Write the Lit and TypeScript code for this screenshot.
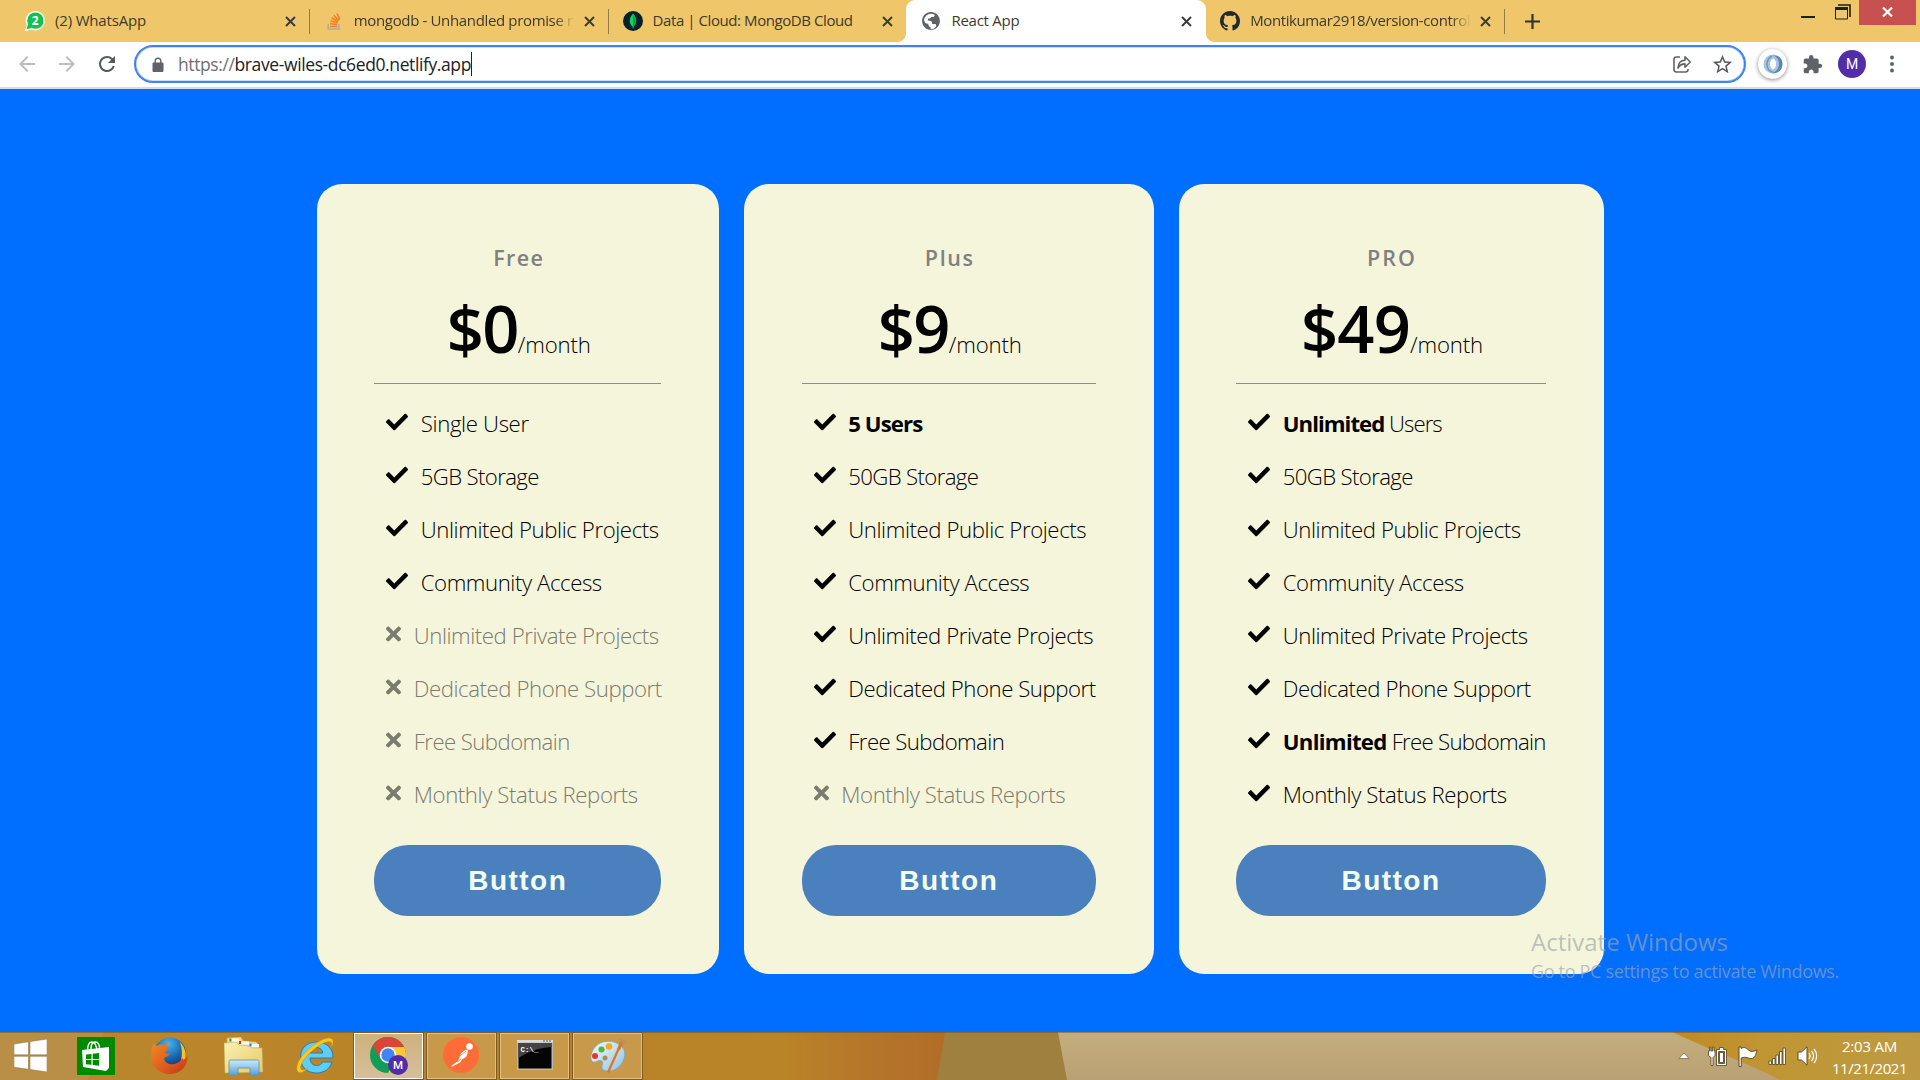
import { LitElement, html, svg, css, nothing } from "lit";
import { customElement, property } from "lit/decorators.js";
import { classMap } from "lit/directives/class-map.js";

/** Inline text whose tracking is adjusted so that it fills a given advance width. */
@customElement("fit-text")
class FitText extends LitElement {
  @property({ type: Number }) w = 0;
  static styles = css`
    :host { display: inline-block; white-space: pre; flex: none; }
  `;
  firstUpdated() {
    const n = (this.textContent ?? "").length;
    const natural = this.getBoundingClientRect().width;
    if (n && this.w) this.style.letterSpacing = `${(this.w - natural) / n}px`;
  }
  render() {
    return html`<slot></slot>`;
  }
}

const icons = {
  check: html`<svg class="check" viewBox="0 0 512 512"><path d="M173.898 439.404l-166.4-166.4c-9.997-9.997-9.997-26.206 0-36.204l36.203-36.204c9.997-9.998 26.207-9.998 36.204 0L192 312.69 432.095 72.596c9.997-9.997 26.207-9.997 36.204 0l36.203 36.204c9.997 9.997 9.997 26.206 0 36.204l-294.4 294.401c-9.998 9.997-26.207 9.997-36.204-.001z"/></svg>`,
  times: html`<svg class="times" viewBox="0 0 352 512"><path d="M242.72 256l100.07-100.07c12.28-12.28 12.28-32.19 0-44.48l-22.24-22.24c-12.28-12.28-32.19-12.28-44.48 0L176 189.28 75.93 89.21c-12.28-12.28-32.19-12.28-44.48 0L9.21 111.45c-12.28 12.28-12.28 32.19 0 44.48L109.28 256 9.21 356.07c-12.28 12.28-12.28 32.19 0 44.48l22.24 22.24c12.28 12.28 32.2 12.28 44.48 0L176 322.72l100.07 100.07c12.28 12.28 32.2 12.28 44.48 0l22.24-22.24c12.28-12.28 12.28-32.19 0-44.48L242.72 256z"/></svg>`,
  close: html`<svg class="close" viewBox="0 0 11 11"><path d="M1 1l9 9M10 1l-9 9" stroke="#3c3c38" stroke-width="2" fill="none"/></svg>`,
  whatsapp: html`<svg class="fav" viewBox="0 0 20 20"><circle cx="10.300" cy="9.700" r="9.700" fill="#fff"/><path d="M0 20l1.800-6 4.700 4.700z" fill="#fff"/><circle cx="10.400" cy="9.600" r="8.200" fill="#12c150"/><path d="M1.600 18.300l1.500-5.300 3.500 3.900z" fill="#12c150"/><text x="10.200" y="14" text-anchor="middle" font-family="Open Sans, sans-serif" font-weight="700" font-size="12" fill="#fff">2</text></svg>`,
  stack: html`<svg class="fav" viewBox="0 0 20 20" fill="none"><path d="M4.200 13v5h10.600v-5" stroke="#b3aca0" stroke-width="1.600"/><g stroke="#f48024" stroke-width="1.700"><path d="M6 15.500h7.200M6 12.700l7.200.8M6.500 9.800l7 2M7.700 6.800l6.300 3.600M9.800 4.300l5 5.200M13 2.500l2.800 6.200"/></g></svg>`,
  mongo: html`<svg class="fav" viewBox="0 0 20 20"><circle cx="10" cy="10" r="10" fill="#04202b"/><path d="M10 2.500c2.400 2.900 3.300 5 3.200 7.500-.1 2.600-1.300 4.200-2.700 5.500l-.2 2h-.6l-.2-2C8.100 14.200 6.900 12.500 6.800 10 6.700 7.500 7.800 5.300 10 2.500z" fill="#12d45b"/><path d="M10 2.500c2.400 2.900 3.300 5 3.200 7.500-.1 2.600-1.300 4.200-2.700 5.500l-.2 2H10z" fill="#0aa84a"/></svg>`,
  globe: html`<svg class="fav" viewBox="0 0 24 24"><path fill="#5f6368" d="M12 1.300C6.100 1.300 1.300 6.100 1.300 12S6.100 22.700 12 22.700 22.700 17.900 22.700 12 17.900 1.300 12 1.300zm0 2.100c1.800 0 3.300.5 4.700 1.400l-.9 1.500c-.4.700-1.200 1-2 1h-1.500l-1.500 1.800H8.500l-.3 2.400 2.800.3c1.400.2 2.300 1.100 2.300 2.300v1.400h3.200c.9 0 1.600.6 1.600 1.500v1.800a8.600 8.600 0 0 1-6.600 3v-2.300l-1.300-.6c-.8-.4-1.300-1.200-1.300-2.100v-1.400l-2.500-.4a2.200 2.200 0 0 1-1.700-1.500l-1.100-2.700A8.600 8.600 0 0 1 12 3.400z"/></svg>`,
  github: html`<svg class="fav" viewBox="0 0 16 16"><path fill="#24292f" d="M8 0C3.580 0 0 3.580 0 8c0 3.540 2.290 6.530 5.470 7.590.4.070.55-.17.55-.38 0-.19-.01-.82-.01-1.490-2.010.37-2.530-.49-2.690-.94-.09-.23-.48-.94-.82-1.130-.28-.15-.68-.52-.01-.53.63-.01 1.080.58 1.230.82.72 1.210 1.870.87 2.330.66.07-.52.28-.87.51-1.070-1.780-.2-3.640-.89-3.640-3.950 0-.87.31-1.590.82-2.150-.08-.2-.36-1.020.08-2.120 0 0 .67-.21 2.200.82.64-.18 1.320-.27 2-.27s1.360.09 2 .27c1.530-1.040 2.200-.82 2.200-.82.44 1.100.16 1.920.08 2.120.51.56.82 1.270.82 2.150 0 3.070-1.870 3.750-3.650 3.950.29.25.54.73.54 1.480 0 1.070-.01 1.930-.01 2.200 0 .21.15.46.55.38A8.010 8.010 0 0 0 16 8c0-4.420-3.580-8-8-8z"/></svg>`,
};

interface Tab { icon: keyof typeof icons; label: string; w: number; active?: boolean; clip?: boolean; }
const tabs: Tab[] = [
  { icon: "whatsapp", label: "(2) WhatsApp", w: 91 },
  { icon: "stack", label: "mongodb - Unhandled promise r", w: 219, clip: true },
  { icon: "mongo", label: "Data | Cloud: MongoDB Cloud", w: 200 },
  { icon: "globe", label: "React App", w: 68, active: true },
  { icon: "github", label: "Montikumar2918/version-control", w: 220, clip: true },
];

/** Browser tab strip, window buttons and address bar. */
@customElement("browser-chrome")
class BrowserChrome extends LitElement {
  static styles = css`
    :host { display: block; }
    svg { display: block; flex: none; }
    .strip { display: flex; height: 42px; background: #efc76a; padding-left: 11px; }
    .tab { position: relative; box-sizing: border-box; width: 298.8px; height: 42px; display: flex; align-items: center; padding: 0 14px; color: #3d3a30; font-size: 15px; }
    .tab::after { content: ""; position: absolute; right: -.500px; top: 9px; width: 1.500px; height: 25px; background: #8f7a48; }
    .tab.active { background: #fff; border-radius: 9px 9px 0 0; margin-left: -1px; padding-left: 15px; width: 299.8px; }
    .tab.active::after, .tab.before-active::after { display: none; }
    .foot { position: absolute; bottom: 0; width: 8px; height: 8px; }
    .foot.l { left: -8px; background: radial-gradient(circle at 0 0, transparent 7.500px, #fff 8px); }
    .foot.r { right: -8px; background: radial-gradient(circle at 100% 0, transparent 7.500px, #fff 8px); }
    .fav { width: 20px; height: 20px; margin-right: 10px; }
    .label { width: 221px; overflow: hidden; white-space: nowrap; line-height: 24px; margin-top: -2px; }
    .label.clip { mask-image: linear-gradient(90deg, #000 91%, transparent 100%); }
    .close { width: 11px; height: 11px; margin-left: 9px; }
    .plus { width: 15px; height: 15px; margin: 14px 0 0 20px; }
    .window { display: flex; margin-left: auto; padding-right: 4px; }
    .min { width: 14px; height: 14px; margin: 5px 20px 0 0; }
    .restore { width: 16px; height: 16px; margin: 4px 8px 0 0; }
    .quit { width: 57px; height: 25px; background: #c75050; display: flex; align-items: center; justify-content: center; }
    .quit svg { width: 11px; height: 10px; margin-top: -2px; }
    .bar { box-sizing: border-box; display: flex; align-items: center; height: 47px; padding: 2px 0 3px 15px; background: #fff; border-bottom: 2px solid #d9dadc; }
    .nav { width: 24px; height: 24px; margin-right: 16px; }
    .nav.reload { margin-right: 15px; }
    .omni { box-sizing: border-box; width: 1612px; height: 38px; border: 2px solid #4083ee; box-shadow: inset 0 0 0 .600px #9cbef7; border-radius: 19px; display: flex; align-items: center; padding: 0 10px 0 16px; }
    .lock { width: 12px; height: 15px; margin-right: 14px; }
    .url { font-size: 17.500px; line-height: 28px; color: #202124; margin-top: -1px; }
    .scheme { color: #6b6f73; }
    .caret { width: 1px; height: 24px; background: #222; }
    .share { width: 21px; height: 20px; margin: 0 18px 0 auto; }
    .star { width: 23px; height: 23px; }
    .ext { width: 29px; height: 30px; margin-left: 12px; border-radius: 50%; box-shadow: 0 1px 4px #0007; display: flex; align-items: center; justify-content: center; }
    .ext svg { width: 20px; height: 20px; }
    .puzzle { width: 21px; height: 21px; margin-left: 15px; }
    .avatar { width: 28px; height: 28px; margin-left: 15px; border-radius: 50%; background: #512da8; color: #fff; text-align: center; font: 14px/28px Roboto, sans-serif; }
    .dots { width: 6px; height: 18px; margin-left: 23px; }
  `;
  render() {
    return html`
      <div class="strip">
        ${tabs.map((t, i) => html`
          <div class=${classMap({ tab: true, active: !!t.active, "before-active": !!tabs[i + 1]?.active })}>
            ${t.active ? html`<i class="foot l"></i><i class="foot r"></i>` : nothing}
            ${icons[t.icon]}
            <div class=${classMap({ label: true, clip: !!t.clip })}><fit-text .w=${t.w}>${t.label}</fit-text></div>
            ${icons.close}
          </div>`)}
        <svg class="plus" viewBox="0 0 15 15"><path d="M7.500 0v15M0 7.500h15" stroke="#33322c" stroke-width="2.200"/></svg>
        <div class="window">
          <svg class="min" viewBox="0 0 14 14"><path d="M0 12h14" stroke="#1e1e1e" stroke-width="2"/></svg>
          <svg class="restore" viewBox="0 0 16 16" fill="none" stroke="#1e1e1e"><path d="M3 1h12v12" stroke-width="1.600"/><path d="M.500 4.500h12v10.500H.500z"/><path d="M0 4.500h13" stroke-width="3"/></svg>
          <div class="quit"><svg viewBox="0 0 11 10"><path d="M1 .500l9 9M10 .500l-9 9" stroke="#fff" stroke-width="2.200"/></svg></div>
        </div>
      </div>
      <div class="bar">
        <svg class="nav" viewBox="0 0 24 24" fill="#bbbdc0"><path d="M20 11H7.830l5.590-5.590L12 4l-8 8 8 8 1.410-1.410L7.830 13H20v-2z"/></svg>
        <svg class="nav" viewBox="0 0 24 24" fill="#bbbdc0"><path d="M12 4l-1.410 1.410L16.170 11H4v2h12.170l-5.580 5.590L12 20l8-8z"/></svg>
        <svg class="nav reload" viewBox="0 0 24 24" fill="#55595d"><path d="M17.650 6.350A7.960 7.960 0 0 0 12 4a8 8 0 1 0 7.730 10h-2.080A6 6 0 1 1 12 6c1.660 0 3.140.69 4.220 1.780L13 11h7V4l-2.350 2.350z"/></svg>
        <div class="omni">
          <svg class="lock" viewBox="0 0 11 15"><path fill="#5f6368" fill-rule="evenodd" d="M1.200 5.500H2V4a3.500 3.500 0 0 1 7 0v1.500h.8c.7 0 1.200.5 1.200 1.200v7c0 .7-.5 1.300-1.200 1.300H1.200C.500 15 0 14.400 0 13.700v-7c0-.7.500-1.200 1.200-1.200zm2.200 0h4.200V4a2.100 2.100 0 0 0-4.200 0z"/></svg>
          <fit-text class="url" .w=${293}><span class="scheme">https://</span>brave-wiles-dc6ed0.netlify.app</fit-text><i class="caret"></i>
          <svg class="share" viewBox="0 0 21 20" fill="none" stroke="#5f6368" stroke-width="1.600"><path d="M8 3H4.500A2.500 2.500 0 0 0 2 5.500v10A2.500 2.500 0 0 0 4.500 18h9a2.500 2.500 0 0 0 2.500-2.500V15"/><path d="M6 14c.3-5 3-7.800 7-7.800V2.800l5.300 5.200-5.300 5.200V9.900c-3 0-5.200 1.200-7 4.100z" stroke-linejoin="round"/></svg>
          <svg class="star" viewBox="0 0 24 24" fill="#55595d"><path d="M22 9.240l-7.190-.62L12 2 9.190 8.630 2 9.240l5.460 4.730L5.820 21 12 17.270 18.180 21l-1.630-7.030L22 9.240zM12 15.400l-3.760 2.270 1-4.280-3.320-2.880 4.380-.38L12 6.100l1.710 4.040 4.380.38-3.320 2.880 1 4.280L12 15.400z"/></svg>
        </div>
        <div class="ext"><svg viewBox="0 0 20 20" fill="none"><path fill="#a9c3de" fill-rule="evenodd" d="M10 .5a9.500 9.500 0 1 0 0 19 9.500 9.500 0 0 0 0-19zM10.300 4.500c2 1 2.700 3 2.700 5.500s-1 4.800-3.300 5.500C7.700 14.500 7 12.500 7 10s1-4.800 3.300-5.500z"/><path d="M9 1.500c4.500.5 7.200 4 7 8.500-.2 4-2.500 7.500-6.500 9.300 6 .2 10-3.800 10-9.300S15.500.700 9 1.500z" fill="#5b86b4"/><path d="M11 18.500C6.500 18 3.800 14.500 4 10c.2-3.500 2-6.500 5-8" stroke="#6f97c1" stroke-width="1.500"/></svg></div>
        <svg class="puzzle" viewBox="0 0 24 24" fill="#5f6368"><path d="M20.500 11H19V7c0-1.100-.9-2-2-2h-4V3.500a2.500 2.500 0 0 0-5 0V5H4c-1.100 0-1.990.9-1.990 2v3.800H3.500c1.490 0 2.700 1.210 2.700 2.700s-1.210 2.700-2.700 2.700H2V20c0 1.100.9 2 2 2h3.800v-1.500c0-1.490 1.210-2.700 2.700-2.700 1.490 0 2.700 1.210 2.700 2.700V22H17c1.100 0 2-.9 2-2v-4h1.500a2.500 2.500 0 0 0 0-5z"/></svg>
        <div class="avatar">M</div>
        <svg class="dots" viewBox="0 0 6 18" fill="#5f6368"><circle cx="3" cy="2.500" r="2"/><circle cx="3" cy="9" r="2"/><circle cx="3" cy="15.500" r="2"/></svg>
      </div>`;
  }
}

interface Feature { bold?: string; text?: string; w: number; off?: boolean; }
interface Plan { name: string; nameW: number; price: string; priceW: number; inner: number; features: Feature[]; }
const shared: Feature[] = [
  { text: "Unlimited Public Projects", w: 238 },
  { text: "Community Access", w: 181 },
];
const plans: Plan[] = [
  {
    name: "Free", nameW: 51, price: "$0", priceW: 71, inner: 287,
    features: [
      { text: "Single User", w: 108 }, { text: "5GB Storage", w: 118 }, ...shared,
      { text: "Unlimited Private Projects", w: 245, off: true },
      { text: "Dedicated Phone Support", w: 248, off: true },
      { text: "Free Subdomain", w: 156, off: true },
      { text: "Monthly Status Reports", w: 224, off: true },
    ],
  },
  {
    name: "Plus", nameW: 50, price: "$9", priceW: 71, inner: 294,
    features: [
      { bold: "5 Users", w: 74 }, { text: "50GB Storage", w: 130 }, ...shared,
      { text: "Unlimited Private Projects", w: 245 },
      { text: "Dedicated Phone Support", w: 247.500 },
      { text: "Free Subdomain", w: 156 },
      { text: "Monthly Status Reports", w: 224, off: true },
    ],
  },
  {
    name: "PRO", nameW: 50, price: "$49", priceW: 109, inner: 309.500,
    features: [
      { bold: "Unlimited", text: " Users", w: 159 }, { text: "50GB Storage", w: 130 }, ...shared,
      { text: "Unlimited Private Projects", w: 245 },
      { text: "Dedicated Phone Support", w: 248 },
      { bold: "Unlimited", text: " Free Subdomain", w: 263 },
      { text: "Monthly Status Reports", w: 224 },
    ],
  },
];

/** The pricing page itself. */
@customElement("pricing-page")
class PricingPage extends LitElement {
  static styles = css`
    :host { display: flex; justify-content: center; align-items: flex-start; gap: 25px; box-sizing: border-box; padding-top: 95px; background: #006eff; }
    .card { box-sizing: content-box; padding: 58px 57.750px 58px; background: #f5f5dc; border-radius: 25px; color: #000; font-size: 22.200px; font-weight: 300; }
    .name { height: 32px; line-height: 32px; text-align: center; color: #808080; font-weight: 600; font-size: 21.500px; padding-left: 2px; }
    .price { margin-top: 10px; height: 89px; line-height: 89px; display: flex; justify-content: center; align-items: baseline; padding-left: 2px; }
    .amount { font-size: 65px; font-weight: 600; }
    .rule { height: 1px; background: #8d8d85; margin: 10px 0 13px; }
    .row { display: flex; align-items: center; height: 53px; line-height: 55px; padding-left: 12px; white-space: nowrap; }
    .row svg { display: block; height: 22px; margin: -4px 12.500px 0 0; flex: none; }
    .check { width: 22px; }
    .times { width: 15px; }
    .off { color: #7b7b6e; fill: #7b7b6e; }
    b { font-weight: 700; }
    button { display: flex; align-items: center; justify-content: center; width: 100%; height: 71px; margin-top: 24px; padding: 0; border: 0; border-radius: 34px; background: #4a80bd; color: #f0fff0; font: bold 28px "Liberation Sans", Arial, sans-serif; }
  `;
  render() {
    return plans.map((p) => html`
      <section class="card" style="width:${p.inner}px">
        <div class="name"><fit-text .w=${p.nameW}>${p.name}</fit-text></div>
        <div class="price"><fit-text class="amount" .w=${p.priceW}>${p.price}</fit-text><fit-text .w=${73}>/month</fit-text></div>
        <div class="rule"></div>
        ${p.features.map((f) => html`
          <div class=${classMap({ row: true, off: !!f.off })}>
            ${f.off ? icons.times : icons.check}
            <fit-text .w=${f.w}>${f.bold ? html`<b>${f.bold}</b>` : nothing}${f.text ?? nothing}</fit-text>
          </div>`)}
        <button><fit-text .w=${99}>Button</fit-text></button>
      </section>`);
  }
}

const apps = {
  start: svg`<svg class="start" viewBox="0 0 33 33" fill="#fff" stroke="#8a6a30" stroke-width=".5"><path d="M0 5l14.500-2.200v13H0zM16 2.600L33 0v15.800H16zM0 17.300h14.500v13L0 28.200zM16 17.300h17V33l-17-2.500z"/></svg>`,
  store: svg`<svg class="store" viewBox="0 0 38 38"><path fill="#008a00" d="M0 0h38v38H0z"/><path d="M10.500 14c0-6 2-9 4.500-9s4 2 5 8M14 12c0-5 2-7 4.500-7s4 3 4 7" fill="none" stroke="#fff" stroke-width="1.400"/><path d="M5 13l27-3v21l-3 3L6 30z" fill="#fff"/><path fill="#008a00" d="M9 17.500l5.500-.6v5H9zM15.700 16.700l6.500-.7v5.900h-6.500zM9 23h5.500v4.800L9 27.200zM15.700 23h6.500v5.700l-6.500-.7z"/></svg>`,
  firefox: svg`<svg class="firefox" viewBox="0 0 37 37"><defs><radialGradient id="fb" cx=".45" cy=".2" r=".8"><stop offset="0" stop-color="#4fb4e8"/><stop offset=".5" stop-color="#1a6fb5"/><stop offset="1" stop-color="#152c66"/></radialGradient><linearGradient id="ff" x1="0" y1="0" x2="1" y2="1"><stop offset="0" stop-color="#f08a24"/><stop offset=".6" stop-color="#dd5a1c"/><stop offset="1" stop-color="#c2331a"/></linearGradient></defs><circle cx="19" cy="16.500" r="16" fill="url(#fb)"/><path d="M29 5c5 5 7 12 5 18-1 5-5 9-9 11 5-7 8-17 4-29z" fill="#f5c22e"/><path d="M3 6c1 2 2 3 3 3 2-2 5-2 7-1l3-3c0 3 0 5 1 7l-3 3c1 2 3 2 5 1-1 4-5 4-6 5 1 5 5 7 10 6 4-.6 7-3 8.500-6.500C32 25 35 21 36.500 18 37 30 29 37 18.500 37 8 37 0 29 0 19 0 13 1 9 3 6z" fill="url(#ff)"/></svg>`,
  folder: svg`<svg class="folder" viewBox="0 0 39 38"><defs><linearGradient id="fo" x1="0" y1="0" x2="1" y2="1"><stop offset="0" stop-color="#fbf2b4"/><stop offset="1" stop-color="#e5c965"/></linearGradient><linearGradient id="fs" x1="0" y1="0" x2="0" y2="1"><stop offset="0" stop-color="#cdeaf7"/><stop offset="1" stop-color="#5aa3d3"/></linearGradient></defs><path d="M3 1l14-1 2 4 13 1 3 3v10H3z" fill="#f1dc8a" stroke="#c9a84e" stroke-width=".6"/><path d="M0 6l12-1 3 3 10 1 3 2h10l1 24-38 1z" fill="url(#fo)" stroke="#cfae55" stroke-width=".6"/><path d="M6 1.500h9v3H6zM16 4.500h9v3h-9zM26 7h9v3h-9z" fill="#fff"/><path d="M5.500 1.500h2v3h-2z" fill="#1e9e46"/><path d="M15 4h2.200v3H15z" fill="#d2362c"/><path d="M25.500 6.500h2v3h-2z" fill="#2f7fd0"/><path d="M6 23h27c2 0 2 1 2 3v12h-9v-7H14v7H5V26c0-2 0-3 1-3z" fill="url(#fs)" stroke="#4f93bf" stroke-width=".8"/></svg>`,
  ie: svg`<svg class="ie" viewBox="0 0 38 37"><path d="M37 21H14c0 5 3 7.500 6.500 7.500 3 0 5-1.200 6-3.500h9.500c-2 7-8 11-15.500 11C11 36 4.500 30 4.500 20.500S11 5 20.500 5C31 5 37.500 12 37 21zM14.200 16h12.600c-.3-3.500-3-5.500-6.300-5.500s-6 2-6.300 5.500z" fill="#5fcdf5" stroke="#1e78b4" stroke-width=".9"/><path d="M2 35c-4-5 2-16 12-24C23 3 33-1 36 2c2 2 1 6-1 9 1-3 1-5 0-6-3-2-11 2-19 9C8 21 3 29 5 32c1 2 4 1 7-1-4 4-8 6-10 4z" fill="#f9c922" stroke="#c98f12" stroke-width=".5"/></svg>`,
  chrome: svg`<svg class="app" viewBox="0 0 38 38"><circle cx="18" cy="18" r="18" fill="#0f9d58"/><path d="M18 18L2.600 8.700A18 18 0 0 1 33.800 9.500L34 10H18z" fill="#db4437"/><path d="M18 10h16.100A18 18 0 0 1 18 36l7.500-14z" fill="#fcc934"/><path d="M2.600 8.700L11 22.500l7-4.500z" fill="#db4437"/><circle cx="18" cy="18" r="8.300" fill="#fff"/><circle cx="18" cy="18" r="6.700" fill="#4285f4"/><circle cx="28" cy="28" r="10" fill="#512da8"/><text x="28" y="32" text-anchor="middle" font-family="Roboto, sans-serif" font-weight="500" font-size="11.500" fill="#fff">M</text></svg>`,
  postman: svg`<svg class="app" viewBox="0 0 38 38"><circle cx="18" cy="18" r="18" fill="#ff6c37"/><circle cx="26.500" cy="9.500" r="3.300" fill="#fff"/><path d="M25 12.500c-4 .5-7 3-8 6.500l-2 5-7 5 1 .7 8-4.200 2-3 4-2.500 1.500-3.500z" fill="#fff"/><path d="M17 19l6-5M14 25l4-3" stroke="#ff6c37" stroke-width=".7"/></svg>`,
  cmd: svg`<svg class="app" viewBox="0 0 38 38"><path d="M1 3h36v30H1z" fill="#b4b9bd"/><path d="M1 3h36v2.500H1z" fill="#d9dde0"/><path d="M27 3.500h2v1h-2zM30 3.500h2v1h-2zM33 3.500h2v1h-2z" fill="#555"/><path d="M2.500 6h33v25.500h-33z" fill="#050505"/><path d="M2.500 6h33v4c-14 1-24 5-33 11z" fill="#444"/><text x="4.500" y="14.500" font-family="Liberation Mono, monospace" font-weight="700" font-size="7.500" fill="#fff">C:\\_</text></svg>`,
  paint: svg`<svg class="app" viewBox="0 0 38 38"><defs><linearGradient id="pp" x1="0" y1="0" x2="1" y2="1"><stop offset="0" stop-color="#f2fafd"/><stop offset="1" stop-color="#8fc4e0"/></linearGradient></defs><path d="M7 9C14 2 28 3 34 11c4 6 1 16-7 21-5 3-13 3-14-1-.5-3 2-5 0-7-3-2-6 2-9 1-4-2-2-11 3-16z" fill="url(#pp)" stroke="#72a9c8" stroke-width=".8"/><circle cx="6" cy="19" r="3" fill="#e23b2e"/><circle cx="12.500" cy="12.500" r="3" fill="#53b436"/><circle cx="20" cy="9.500" r="3.300" fill="#f7a81b"/><circle cx="16" cy="21" r="2.500" fill="#b38a4a"/><path d="M31 6l2 1-13 29-2-1z" fill="#e8701c"/><path d="M30 1l8 3c-1 4-3 4-5 4l-3-2z" fill="#c39058"/><path d="M31 5l3 1.500-3 7-3-1.500z" fill="#d77a2a"/></svg>`,
};

/** Desktop taskbar with launcher icons, tray and clock. */
@customElement("task-bar")
class TaskBar extends LitElement {
  static styles = css`
    :host { display: block; position: relative; height: 48px; overflow: hidden; }
    .wall { position: absolute; inset: 0; width: 1920px; height: 48px; }
    .items { position: relative; display: flex; align-items: center; height: 48px; }
    svg { display: block; flex: none; }
    .start { width: 33px; height: 33px; margin: -2px 30px 0 14px; }
    .store { width: 38px; height: 38px; margin-right: 36px; }
    .firefox { width: 37px; height: 37px; margin: -2px 36px 0 0; }
    .folder { width: 39px; height: 38px; margin-right: 33px; }
    .ie { width: 38px; height: 37px; margin: -2px 19px 0 0; }
    .btn { box-sizing: border-box; width: 71px; height: 48px; margin-right: 2px; border: 1px solid #7b5c25; box-shadow: inset 0 0 0 1px #dcc18c; background: #d0a45cb0; display: flex; align-items: center; justify-content: center; }
    .btn.on { background: linear-gradient(#cdb17e, #d5c09a); box-shadow: inset 0 0 0 1px #fff; }
    .app { width: 38px; height: 38px; }
    .tray { display: flex; align-items: center; margin-left: auto; padding-right: 8.500px; }
    .up { width: 12px; height: 8px; margin: 0 18px 0 0; }
    .bat { width: 20px; height: 21px; margin-right: 10px; }
    .flag { width: 20px; height: 21px; margin-right: 10px; }
    .sig { width: 18px; height: 18px; margin-right: 11px; }
    .snd { width: 21px; height: 20px; margin-right: 10px; }
    .clock { width: 84px; text-align: center; color: #fff; font-size: 15px; line-height: 22px; padding-top: 1px; }
    .clock div { height: 22px; }
  `;
  render() {
    return html`
      <svg class="wall" viewBox="0 0 1920 48" preserveAspectRatio="none">
        <defs>
          <linearGradient id="a"><stop offset="0" stop-color="#bb8830"/><stop offset=".5" stop-color="#b98226"/><stop offset=".82" stop-color="#b98327"/><stop offset=".9" stop-color="#b5762a"/><stop offset="1" stop-color="#b16c28"/></linearGradient>
          <linearGradient id="b" x2="0" y2="1"><stop offset="0" stop-color="#c4ad7d"/><stop offset="1" stop-color="#b9a175"/></linearGradient>
          <linearGradient id="c"><stop offset="0" stop-color="#c08a25"/><stop offset=".4" stop-color="#c09634"/><stop offset="1" stop-color="#bd9a42"/></linearGradient>
        </defs>
        <path d="M0 0h960v48H0z" fill="url(#a)"/>
        <path d="M0 0h103L88 48H0z" fill="#b98f47"/>
        <path d="M945 0h130v48H937z" fill="#9f803f"/>
        <path d="M1058 0h862v48H1067z" fill="url(#b)"/>
        <path d="M1672 0h248v48h-140c-30-16-70-30-108-48z" fill="url(#c)"/>
        <path d="M0 .500h1920" stroke="#5e4a20" stroke-opacity=".45"/>
      </svg>
      <div class="items">
        ${apps.start}${apps.store}${apps.firefox}${apps.folder}${apps.ie}
        <div class="btn on">${apps.chrome}</div>
        <div class="btn">${apps.postman}</div>
        <div class="btn">${apps.cmd}</div>
        <div class="btn">${apps.paint}</div>
        <div class="tray">
          <svg class="up" viewBox="0 0 12 8"><path d="M6 1l5 5.500H1z" fill="#fff" stroke="#6e5d38" stroke-width=".7"/></svg>
          <svg class="bat" viewBox="0 0 20 21"><g stroke="#4f3f1c" stroke-width=".8"><path d="M8.500 3.500h3V1.500h4v2h3v16h-10z" fill="#fff"/><path d="M10.500 5.500h6v12h-6z" fill="#ad9563"/><path d="M11.500 6.500h4v10h-4z" fill="#fff"/><path d="M1.500 1h1.300v4h1.800V1H6v4h1v4.500L5 11.500v8H3v-8L.500 9.500V5h1z" fill="#fff"/></g></svg>
          <svg class="flag" viewBox="0 0 20 21"><path d="M1 1h2.200v1.500C7 0 9 3 11 4.500c2 1.500 5 1 8-.5-1 4-2 8-5 8.500-3 .5-6-2.500-10.800-.5V20.500H1z" fill="#fff" stroke="#4f3f1c" stroke-width=".9"/></svg>
          <svg class="sig" viewBox="0 0 18 18"><path d="M1 14h2.500v3.500H1zM4.500 11.500H7v6H4.500zM8 8h2.500v9.500H8zM11.500 4.500H14v13h-2.500zM15 1h2.500v16.500H15z" fill="#fff" stroke="#4f3f1c" stroke-width=".8"/></svg>
          <svg class="snd" viewBox="0 0 21 20"><path d="M1 6h3.500L10 .800v18.400L4.500 14H1z" fill="#fff" stroke="#4f3f1c" stroke-width=".9"/><path d="M12 7c1.500 2 1.500 4 0 6M14.500 5c2.500 3 2.500 7 0 10M17 3c3.500 4 3.500 10 0 14" fill="none" stroke="#fff" stroke-width="1.200"/></svg>
          <div class="clock"><div><fit-text .w=${55}>2:03 AM</fit-text></div><div><fit-text .w=${75}>11/21/2021</fit-text></div></div>
        </div>
      </div>`;
  }
}

@customElement("app-root")
class AppRoot extends LitElement {
  static styles = css`
    :host { display: block; position: relative; width: 1920px; height: 1080px; overflow: hidden; font-family: "Open Sans", "Noto Sans", sans-serif; }
    .screen { display: flex; flex-direction: column; height: 1080px; }
    pricing-page { flex: 1; min-height: 0; }
    .mark { position: absolute; left: 1531px; top: 925px; color: #a0a4a8a8; pointer-events: none; }
    .mark .big { font-size: 24px; line-height: 34px; }
    .mark .small { font-size: 18px; line-height: 24px; }
  `;
  render() {
    return html`
      <div class="screen">
        <browser-chrome></browser-chrome>
        <pricing-page></pricing-page>
        <task-bar></task-bar>
      </div>
      <div class="mark">
        <div class="big"><fit-text .w=${197}>Activate Windows</fit-text></div>
        <div class="small"><fit-text .w=${308}>Go to PC settings to activate Windows.</fit-text></div>
      </div>`;
  }
}
